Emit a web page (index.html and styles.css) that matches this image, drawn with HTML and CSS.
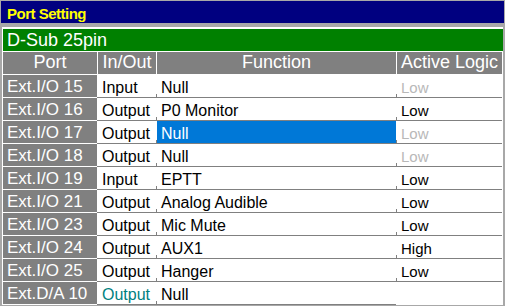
FILE: index.html
```html
<!DOCTYPE html>
<html>
<head>
<meta charset="utf-8">
<link rel="stylesheet" href="styles.css">
</head>
<body>
<div class="title">Port Setting</div>
<div class="panel">
  <div class="group">D-Sub 25pin</div>
  <div class="head">
    <div class="hcell">Port</div>
    <div class="hcell">In/Out</div>
    <div class="hcell">Function</div>
    <div class="hcell">Active Logic</div>
  </div>
  <div class="row">
    <div class="port">Ext.I/O 15</div><div class="io">Input</div><div class="fn">Null</div><div class="logic dis">Low</div>
  </div>
  <div class="row">
    <div class="port">Ext.I/O 16</div><div class="io">Output</div><div class="fn">P0 Monitor</div><div class="logic">Low</div>
  </div>
  <div class="row">
    <div class="port">Ext.I/O 17</div><div class="io">Output</div><div class="fn sel">Null</div><div class="logic dis">Low</div>
  </div>
  <div class="row">
    <div class="port">Ext.I/O 18</div><div class="io">Output</div><div class="fn">Null</div><div class="logic dis">Low</div>
  </div>
  <div class="row">
    <div class="port">Ext.I/O 19</div><div class="io">Input</div><div class="fn">EPTT</div><div class="logic">Low</div>
  </div>
  <div class="row">
    <div class="port">Ext.I/O 21</div><div class="io">Output</div><div class="fn">Analog Audible</div><div class="logic">Low</div>
  </div>
  <div class="row">
    <div class="port">Ext.I/O 23</div><div class="io">Output</div><div class="fn">Mic Mute</div><div class="logic">Low</div>
  </div>
  <div class="row">
    <div class="port">Ext.I/O 24</div><div class="io">Output</div><div class="fn">AUX1</div><div class="logic">High</div>
  </div>
  <div class="row">
    <div class="port">Ext.I/O 25</div><div class="io">Output</div><div class="fn">Hanger</div><div class="logic">Low</div>
  </div>
  <div class="row last">
    <div class="port">Ext.D/A 10</div><div class="io teal">Output</div><div class="fn">Null</div><div class="logic"></div>
  </div>
</div>
</body>
</html>
```
FILE: styles.css
```css
html, body {
  margin: 0;
  padding: 0;
}
body {
  width: 505px;
  height: 306px;
  overflow: hidden;
  background: #a8a8a8;
  font-family: "Liberation Sans", Arial, sans-serif;
  padding-top: 1px;
  box-sizing: border-box;
}
.title {
  margin: 0 1px 0 1px;
  height: 22px;
  box-sizing: border-box;
  background: #000080;
  color: #ffff00;
  font-weight: bold;
  font-size: 15px;
  letter-spacing: -0.5px;
  line-height: 18px;
  padding: 4px 0 0 6px;
}
.panel {
  margin-top: 4px;
  margin-left: 2px;
  border-top: 1px solid #ffffff;
  border-left: 1px solid #ffffff;
  background: #ffffff;
  padding-top: 1px;
  width: 500px;
}
.group {
  height: 22px;
  background: #008000;
  color: #ffffff;
  font-size: 18px;
  line-height: 22px;
  padding-left: 4px;
}
.head {
  margin-top: 1px;
  display: grid;
  grid-template-columns: 94px 58px 239px 105px;
  column-gap: 1px;
  height: 23px;
}
.hcell {
  height: 22px;
  background: #808080;
  color: #ffffff;
  font-size: 18px;
  line-height: 20px;
  text-align: center;
  white-space: nowrap;
}
.row {
  display: grid;
  grid-template-columns: 94px 58px 239px 105px;
  column-gap: 1px;
  height: 23px;
  background:
    linear-gradient(#808080, #808080) 94px 22px / 405px 1px no-repeat,
    linear-gradient(#808080, #808080) 153px 19px / 1px 3px no-repeat,
    linear-gradient(#808080, #808080) 393px 19px / 1px 3px no-repeat,
    #ffffff;
}
.row.last {
  background:
    linear-gradient(#808080, #808080) 94px 22px / 299px 1px no-repeat,
    linear-gradient(#808080, #808080) 153px 19px / 1px 3px no-repeat,
    #ffffff;
}
.row > div {
  height: 22px;
  box-sizing: border-box;
  padding-left: 4px;
  white-space: nowrap;
  overflow: hidden;
}
.port {
  background: #808080;
  color: #ffffff;
  font-size: 17px;
  line-height: 18px;
  padding-top: 3px;
}
.io, .fn {
  color: #000000;
  font-size: 16px;
  line-height: 18px;
  padding-top: 4px;
}
.logic {
  color: #000000;
  font-size: 15px;
  line-height: 18px;
  padding-top: 4px;
}
.dis {
  color: #b8b8b8;
}
.teal {
  color: #008080;
}
.sel {
  background: #0078d7;
  color: #ffffff;
}
```
